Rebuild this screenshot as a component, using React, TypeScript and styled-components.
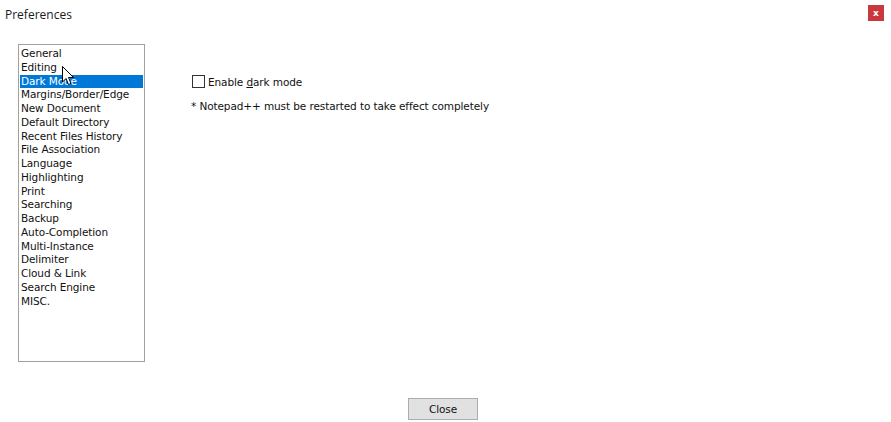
import React from "react";
import styled, { createGlobalStyle } from "styled-components";

const Global = createGlobalStyle`
  html, body { margin: 0; padding: 0; background: #ffffff; }
  body { font-family: Tahoma, "DejaVu Sans", sans-serif; }
`;

const Window = styled.div`
  position: relative;
  width: 891px;
  height: 422px;
  background: #ffffff;
  overflow: hidden;
  display: flex;
  flex-direction: column;
`;

const TitleBar = styled.div`
  height: 26px;
  display: flex;
  align-items: center;
  justify-content: space-between;
  padding: 0 7px 0 5px;
`;

const Title = styled.span`
  font-family: "Open Sans", "DejaVu Sans", sans-serif;
  font-size: 12px;
  color: #1a1a1a;
  margin-top: 2px;
`;

const CloseX = styled.div`
  width: 16px;
  height: 16px;
  background: #c8393c;
  display: flex;
  align-items: center;
  justify-content: center;
  color: #fff;
  font-family: "DejaVu Sans", sans-serif;
  font-size: 9px;
  font-weight: bold;
  margin-bottom: 1px;
`;

const Body = styled.div`
  display: flex;
  padding: 18px 0 0 18px;
  gap: 46px;
  flex: 1;
`;

const ListBox = styled.div`
  border: 1px solid #a0a0a0;
  padding: 2px 1px 0 1px;
  box-sizing: border-box;
  height: 318px;
  width: 127px;
  display: flex;
  flex-direction: column;
`;

const Item = styled.div<{ $selected?: boolean }>`
  height: 13.75px;
  line-height: 13.75px;
  padding-left: 1px;
  font-family: "DejaVu Sans", sans-serif;
  font-size: 10.5px;
  letter-spacing: -0.1px;
  white-space: nowrap;
  color: ${(p) => (p.$selected ? "#ffffff" : "#111111")};
  background: ${(p) => (p.$selected ? "#0078d7" : "transparent")};
`;

const Panel = styled.div`
  display: flex;
  flex-direction: column;
  padding-top: 31px;
  gap: 12px;
`;

const CheckRow = styled.label`
  display: flex;
  align-items: center;
  gap: 3px;
  margin-left: 1px;
`;

const Box = styled.span`
  width: 11px;
  height: 11px;
  border: 1px solid #333333;
  background: #fff;
  display: inline-block;
`;

const Label = styled.span`
  font-family: "DejaVu Sans", sans-serif;
  font-size: 10.5px;
  letter-spacing: -0.1px;
  color: #111;
`;

const Note = styled.div`
  font-family: "DejaVu Sans", sans-serif;
  font-size: 10.5px;
  letter-spacing: -0.1px;
  color: #111;
`;

const Footer = styled.div`
  display: flex;
  justify-content: center;
  padding: 0 0 2px 0;
`;

const Button = styled.button`
  width: 70px;
  height: 22px;
  background: #e1e1e1;
  border: 1px solid #adadad;
  font-family: "DejaVu Sans", sans-serif;
  font-size: 10.5px;
  letter-spacing: -0.1px;
  color: #111;
  padding: 0;
  margin-left: -5px;
`;

const Cursor = styled.svg`
  position: absolute;
  left: 62px;
  top: 66px;
`;

const items = [
  "General",
  "Editing",
  "Dark Mode",
  "Margins/Border/Edge",
  "New Document",
  "Default Directory",
  "Recent Files History",
  "File Association",
  "Language",
  "Highlighting",
  "Print",
  "Searching",
  "Backup",
  "Auto-Completion",
  "Multi-Instance",
  "Delimiter",
  "Cloud & Link",
  "Search Engine",
  "MISC.",
];

export default function App() {
  return (
    <Window>
      <Global />
      <TitleBar>
        <Title>Preferences</Title>
        <CloseX>x</CloseX>
      </TitleBar>
      <Body>
        <ListBox>
          {items.map((t) => (
            <Item key={t} $selected={t === "Dark Mode"}>
              {t}
            </Item>
          ))}
        </ListBox>
        <Panel>
          <CheckRow>
            <Box />
            <Label>
              Enable <u>d</u>ark mode
            </Label>
          </CheckRow>
          <Note>* Notepad++ must be restarted to take effect completely</Note>
        </Panel>
      </Body>
      <Footer>
        <Button>Close</Button>
      </Footer>
      <Cursor width="13" height="20" viewBox="0 0 13 20">
        <path d="M0.5 0.5 L0.5 16 L4 12.5 L6.5 18.5 L9 17.5 L6.5 11.5 L11.5 11.5 Z" fill="#fff" stroke="#000" strokeWidth="1" />
      </Cursor>
    </Window>
  );
}
